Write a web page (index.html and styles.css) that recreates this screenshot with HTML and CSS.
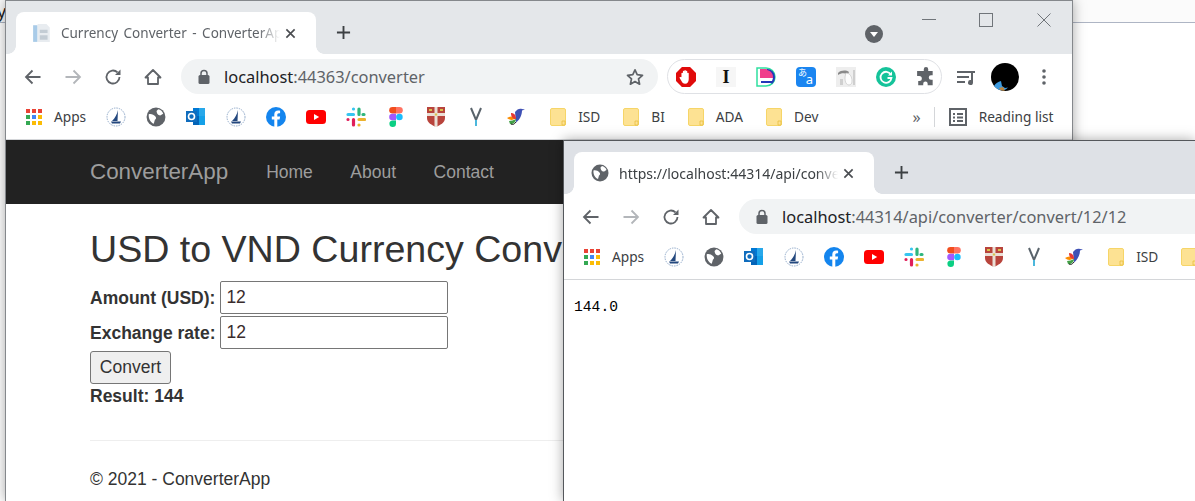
FILE: index.html
```html
<!DOCTYPE html>
<html lang="en">
<head>
  <meta charset="UTF-8">
  <title>Currency Converter - ConverterApp</title>
  <link rel="stylesheet" href="styles.css">
</head>
<body>
  <svg class="defs" aria-hidden="true">
    <symbol id="i-back" viewBox="0 0 18 18"><path d="M16.5 9H2M8.5 2.5L2 9l6.500 6.500" fill="none" stroke="currentColor" stroke-width="1.800"/></symbol>
    <symbol id="i-forward" viewBox="0 0 18 18"><path d="M1.500 9H16M9.500 2.500L16 9l-6.500 6.500" fill="none" stroke="currentColor" stroke-width="1.800"/></symbol>
    <symbol id="i-reload" viewBox="0 0 18 18"><path d="M15.500 9a6.500 6.500 0 1 1-2-4.700" fill="none" stroke="currentColor" stroke-width="1.800"/><path d="M16.500 1.500v5.500h-5.500z" fill="currentColor"/></symbol>
    <symbol id="i-home" viewBox="0 0 18 18"><path d="M9 2L16.500 9.500H14V16H4V9.500H1.500z" fill="none" stroke="currentColor" stroke-width="1.800" stroke-linejoin="round"/></symbol>
    <symbol id="i-lock" viewBox="0 0 14 16"><rect x="1.500" y="6" width="11" height="9" rx="1.500" fill="currentColor"/><path d="M4 6.500V4.500a3 3 0 0 1 6 0v2" fill="none" stroke="currentColor" stroke-width="1.500"/></symbol>
    <symbol id="i-star" viewBox="0 0 18 18"><path d="M9 1.800l2.200 4.900 5.300.6-4 3.600 1.100 5.300L9 13.500l-4.600 2.700 1.100-5.300-4-3.600 5.300-.6z" fill="none" stroke="#5f6368" stroke-width="1.700" stroke-linejoin="round"/></symbol>
    <symbol id="i-close" viewBox="0 0 12 12"><path d="M1.500 1.500l9 9M10.500 1.500l-9 9" fill="none" stroke="currentColor" stroke-width="1.800"/></symbol>
    <symbol id="i-plus" viewBox="0 0 16 16"><path d="M8 1v14M1 8h14" fill="none" stroke="currentColor" stroke-width="2"/></symbol>
    <symbol id="i-doc" viewBox="0 0 18 18"><path d="M1 2h4v15H1z" fill="#a9cbe8"/><path d="M5 1h8l3 3v13H5z" fill="#e8ecf0"/><path d="M7 6h7v3H7zM7 11h7v4H7z" fill="#c3ccd4"/></symbol>
    <symbol id="i-globe" viewBox="0 0 18 18"><circle cx="9" cy="9" r="8.500" fill="#5f6368"/><path d="M2.500 6.500C5 6 7 7 8.500 8.500c1 1 .5 2.500-.5 3l-1 3.500C4 14 2 10 2.500 6.500zM11 2c2 .5 4 2 4.500 4-1.500.500-2 2-3.500 1.500S9.500 5 9.500 3.500z" fill="#fff"/></symbol>
    <symbol id="i-grid" viewBox="0 0 16 16">
      <rect width="4" height="4" fill="#ea4335"/><rect x="6" width="4" height="4" fill="#ea4335"/><rect x="12" width="4" height="4" fill="#ea4335"/>
      <rect y="6" width="4" height="4" fill="#34a853"/><rect x="6" y="6" width="4" height="4" fill="#4285f4"/><rect x="12" y="6" width="4" height="4" fill="#fbbc05"/>
      <rect y="12" width="4" height="4" fill="#34a853"/><rect x="6" y="12" width="4" height="4" fill="#fbbc05"/><rect x="12" y="12" width="4" height="4" fill="#fbbc05"/>
    </symbol>
    <symbol id="i-sail" viewBox="0 0 20 20"><circle cx="10" cy="10" r="9" fill="#fff" stroke="#8fa9c9" stroke-width="1" stroke-dasharray="1.500 1"/><path d="M12 3L11.500 14H6C9 11 11 7.500 12 3z" fill="#24487e"/><path d="M5 14.500h10l-1 2H6z" fill="#24487e"/></symbol>
    <symbol id="i-outlook" viewBox="0 0 20 20"><path d="M7 1h12v8H7z" fill="#28a8ea"/><path d="M7 1h6v8H7z" fill="#0078d4"/><path d="M7 9h12v9H7z" fill="#0364b8"/><path d="M13 9h6v9h-6z" fill="#14a0e8"/><rect y="4" width="11" height="11" fill="#0f6cbd"/><circle cx="5.500" cy="9.500" r="3" fill="none" stroke="#fff" stroke-width="1.600"/></symbol>
    <symbol id="i-fb" viewBox="0 0 20 20"><circle cx="10" cy="10" r="10" fill="#1485ee"/><path d="M8.300 20v-7.500H5.800V9.600h2.500V7.400c0-2.500 1.500-3.900 3.800-3.900 1 0 2 .2 2 .2v2.500h-1.200c-1.200 0-1.600.8-1.600 1.500v1.900h2.800l-.5 2.900h-2.300V20z" fill="#fff"/></symbol>
    <symbol id="i-yt" viewBox="0 0 20 14"><rect width="20" height="14" rx="3.500" fill="#f00"/><path d="M8 4l5.200 3L8 10z" fill="#fff"/></symbol>
    <symbol id="i-slack" viewBox="0 0 20 20" fill="none" stroke-width="3.200" stroke-linecap="round">
      <path d="M7.500 2v0M7.500 7.500H2" stroke="#36c5f0"/><path d="M13 2v5.500M18 7.500h-1" stroke="#2eb67d"/><path d="M13 18v0M13 12.500h5.500" stroke="#ecb22e"/><path d="M7.500 18v-5.500M2 12.500h0" stroke="#e01e5a"/>
    </symbol>
    <symbol id="i-figma" viewBox="0 0 14 20"><path d="M7 0H3.500a3.300 3.300 0 0 0 0 6.600H7z" fill="#f24e1e"/><path d="M7 0h3.500a3.300 3.300 0 0 1 0 6.600H7z" fill="#ff7262"/><path d="M7 6.700H3.500a3.300 3.300 0 0 0 0 6.600H7z" fill="#a259ff"/><circle cx="10.400" cy="10" r="3.300" fill="#1abcfe"/><path d="M3.500 13.400H7v3.300a3.300 3.300 0 1 1-3.500-3.300z" fill="#0acf83"/></symbol>
    <symbol id="i-shield" viewBox="0 0 18 20"><path d="M0 0h18v11c0 5-5 7-9 9-4-2-9-4-9-9z" fill="#b8443c"/><path d="M7.500 0h3v20h-3zM0 6h18v3H0z" fill="#eadfd6"/><path d="M2 2h3v2H2zM13 2h3v2h-3zM7.800 6.500h2.400v2H7.800z" fill="#d8c24a"/></symbol>
    <symbol id="i-v" viewBox="0 0 14 20"><path d="M2 1l5 12 5-12" fill="none" stroke="#59636b" stroke-width="2"/><path d="M6 13h2v6H6z" fill="#4cb7dc"/></symbol>
    <symbol id="i-bird" viewBox="0 0 20 20"><path d="M9 5c2-3 5-4 7-3l3 .5-3 1c0 4-2 9-6 12z" fill="#3f51b5"/><path d="M1 11c3-2 6-2 9 0-2 2-6 3-9 0z" fill="#fb8c00"/><path d="M5 6c3 0 5 2 5 6-3 0-5-2-5-6z" fill="#e53935"/><path d="M3 14c2 0 5-1 7-2 0 3-3 6-6 5z" fill="#43a047"/><path d="M5 17c2 1 3 .5 5-2" fill="none" stroke="#222" stroke-width="1"/></symbol>
    <symbol id="i-folder" viewBox="0 0 16 18"><rect x=".5" y=".5" width="15" height="17" rx="1.500" fill="#fde293" stroke="#f6d568"/><path d="M12 13h3v4h-3z" fill="#fde293" stroke="#e8bf3f" stroke-width=".8"/></symbol>
    <symbol id="i-list" viewBox="0 0 18 18"><rect x="1" y="1" width="16" height="16" fill="none" stroke="#5f6368" stroke-width="2"/><path d="M4 5h2v2H4zM8 5h6v2H8zM4 8.500h2v2H4zM8 8.500h6v2H8zM4 12h2v2H4zM8 12h6v2H8z" fill="#5f6368"/></symbol>
    <symbol id="i-stop" viewBox="0 0 22 22"><path d="M6.500 0h9L22 6.500v9L15.500 22h-9L0 15.500v-9z" fill="#e00b0b"/><path d="M6 11V7a.8.800 0 0 1 1.600 0v3V5a.8.800 0 0 1 1.600 0v5V4a.8.800 0 0 1 1.600 0v6V5a.8.800 0 0 1 1.600 0v6V7a.8.800 0 0 1 1.600 0v6.500c0 3-1.500 5-4 5-2 0-3-1-4-3l-2-3.500c-.5-1 .8-1.500 1.500-.8z" fill="#fff"/></symbol>
    <symbol id="i-book" viewBox="0 0 20 20"><path d="M1 1h9a9 9 0 0 1 0 18H1z" fill="#fff" stroke="#2fe0a0" stroke-width="1.500"/><path d="M4 2h6a8 8 0 0 1 8 8v1H4z" fill="#f03e8c"/><path d="M11 2a8 8 0 0 1 8 8c0 3-1 5-3 7l-1-1c1-2 2-4 2-6 0-3-2-6-6-7z" fill="#2438b8"/><path d="M5 14h11v2H5z" fill="#2438b8"/></symbol>
    <symbol id="i-toucan" viewBox="0 0 20 20"><rect width="20" height="20" fill="#eeeeee"/><path d="M2 6c3-3 8-3 11-1l-1 2C8 6 5 6 2 8z" fill="#8a8a8a"/><path d="M10 6c4 0 6 4 6 8 0 2-1 4-3 4-4 0-5-7-3-12z" fill="#fdfdfd" stroke="#bdbdbd" stroke-width=".6"/><path d="M17 3h2v15h-2zM4 12h3v6H4z" fill="#cfcfcf"/></symbol>
    <symbol id="i-grammarly" viewBox="0 0 20 20"><circle cx="10" cy="10" r="10" fill="#15c39a"/><path d="M14.800 7.500A5.500 5.500 0 1 0 15.500 11h-4" fill="none" stroke="#fff" stroke-width="1.800"/><path d="M16 4.500v4h-4z" fill="#fff"/></symbol>
    <symbol id="i-puzzle" viewBox="0 0 18 18"><path d="M7 2a2 2 0 0 1 4 0v1.500h4v4h-1.500a2 2 0 0 0 0 4H15v5h-4.500V15a2 2 0 0 0-4 0v1.500H2v-4h1a2.200 2.200 0 0 0 0-4.500H1V3.500h6z" fill="#5f6368"/></symbol>
    <symbol id="i-media" viewBox="0 0 20 18"><path d="M1 3h14v2H1zM1 8h12v2H1zM1 13h8v2H1z" fill="#5f6368"/><path d="M15 3h4v2h-2v9.500a2.500 2.500 0 1 1-2-2.400z" fill="#5f6368"/></symbol>
    <symbol id="i-avatar" viewBox="0 0 28 28"><circle cx="14" cy="14" r="14" fill="#000"/><path d="M3 23c2-3 4-4 7-5l1 5 3 2 3-.500C13 29 7 28 3 23z" fill="#3d9be0"/><path d="M8 25l4-1 2 3.500C11 28 9 27 8 25z" fill="#c0853c"/></symbol>
    <symbol id="i-kebab" viewBox="0 0 4 16"><circle cx="2" cy="2" r="1.800" fill="#5f6368"/><circle cx="2" cy="8" r="1.800" fill="#5f6368"/><circle cx="2" cy="14" r="1.800" fill="#5f6368"/></symbol>
    <symbol id="i-drop" viewBox="0 0 18 18"><circle cx="9" cy="9" r="9" fill="#5f6368"/><path d="M5 7h8l-4 5z" fill="#fff"/></symbol>
  </svg>

  <div class="desk-header">y</div>

  <!-- first window: the converter page -->
  <section class="window win-main">
    <div class="tabstrip">
      <div class="tab">
        <svg class="tab-icon"><use href="#i-doc"/></svg>
        <span class="tab-title">Currency Converter - ConverterApp</span>
        <svg class="tab-close"><use href="#i-close"/></svg>
      </div>
      <svg class="new-tab"><use href="#i-plus"/></svg>
      <svg class="tab-search"><use href="#i-drop"/></svg>
      <div class="win-controls">
        <span class="ctl-min"></span>
        <span class="ctl-max"></span>
        <svg class="ctl-close" viewBox="0 0 14 14"><path d="M.5.5l13 13M13.500.5l-13 13"/></svg>
      </div>
    </div>
    <div class="toolbar">
      <span class="tool"><svg class="tool-icon"><use href="#i-back"/></svg></span>
      <span class="tool is-off"><svg class="tool-icon"><use href="#i-forward"/></svg></span>
      <span class="tool"><svg class="tool-icon"><use href="#i-reload"/></svg></span>
      <span class="tool"><svg class="tool-icon"><use href="#i-home"/></svg></span>
      <div class="omnibox">
        <svg class="lock"><use href="#i-lock"/></svg>
        <span class="url"><b>localhost</b>:44363/converter</span>
        <svg class="star"><use href="#i-star"/></svg>
      </div>
      <div class="ext-pill">
        <svg class="ext"><use href="#i-stop"/></svg>
        <span class="ext ext-i">I</span>
        <svg class="ext"><use href="#i-book"/></svg>
        <span class="ext ext-tr"><span class="tr-ja">あ</span><span class="tr-en">a</span></span>
        <svg class="ext"><use href="#i-toucan"/></svg>
        <svg class="ext"><use href="#i-grammarly"/></svg>
        <svg class="ext"><use href="#i-puzzle"/></svg>
      </div>
      <span class="tool tool-media"><svg class="media"><use href="#i-media"/></svg></span>
      <span class="tool tool-tight"><svg class="avatar"><use href="#i-avatar"/></svg></span>
      <span class="tool tool-tight"><svg class="kebab"><use href="#i-kebab"/></svg></span>
    </div>
    <div class="bookmarks">
      <span class="bm bm-apps"><svg class="bm-small"><use href="#i-grid"/></svg>Apps</span>
      <span class="bm"><svg class="bm-icon"><use href="#i-sail"/></svg></span>
      <span class="bm"><svg class="bm-icon"><use href="#i-globe"/></svg></span>
      <span class="bm"><svg class="bm-icon"><use href="#i-outlook"/></svg></span>
      <span class="bm"><svg class="bm-icon"><use href="#i-sail"/></svg></span>
      <span class="bm"><svg class="bm-icon"><use href="#i-fb"/></svg></span>
      <span class="bm"><svg class="bm-icon"><use href="#i-yt"/></svg></span>
      <span class="bm"><svg class="bm-icon"><use href="#i-slack"/></svg></span>
      <span class="bm"><svg class="bm-icon"><use href="#i-figma"/></svg></span>
      <span class="bm"><svg class="bm-icon"><use href="#i-shield"/></svg></span>
      <span class="bm"><svg class="bm-icon"><use href="#i-v"/></svg></span>
      <span class="bm"><svg class="bm-icon"><use href="#i-bird"/></svg></span>
      <span class="bm bm-folder bm-first"><svg class="bm-small"><use href="#i-folder"/></svg>ISD</span>
      <span class="bm bm-folder"><svg class="bm-small"><use href="#i-folder"/></svg>BI</span>
      <span class="bm bm-folder"><svg class="bm-small"><use href="#i-folder"/></svg>ADA</span>
      <span class="bm bm-folder"><svg class="bm-small"><use href="#i-folder"/></svg>Dev</span>
      <span class="bm-more">»</span>
      <span class="bm-sep"></span>
      <span class="bm bm-read"><svg class="bm-list"><use href="#i-list"/></svg>Reading list</span>
    </div>

    <nav class="navbar">
      <a class="brand">ConverterApp</a>
      <a class="nav-link">Home</a>
      <a class="nav-link">About</a>
      <a class="nav-link">Contact</a>
    </nav>
    <main class="page">
      <h1 class="page-title">USD to VND Currency Converter</h1>
      <div class="field">
        <label class="field-label">Amount (USD):</label>
        <input class="field-input" type="text" value="12">
      </div>
      <div class="field">
        <label class="field-label">Exchange rate:</label>
        <input class="field-input" type="text" value="12">
      </div>
      <button class="btn" type="button">Convert</button>
      <p class="result">Result: 144</p>
      <hr class="rule">
      <footer class="foot">© 2021 - ConverterApp</footer>
    </main>
  </section>

  <!-- second window: raw api response -->
  <section class="window win-api">
    <div class="tabstrip">
      <div class="tab">
        <svg class="tab-icon"><use href="#i-globe"/></svg>
        <span class="tab-title">https://localhost:44314/api/converter/convert/12/12</span>
        <svg class="tab-close"><use href="#i-close"/></svg>
      </div>
      <svg class="new-tab"><use href="#i-plus"/></svg>
    </div>
    <div class="toolbar">
      <span class="tool"><svg class="tool-icon"><use href="#i-back"/></svg></span>
      <span class="tool is-off"><svg class="tool-icon"><use href="#i-forward"/></svg></span>
      <span class="tool"><svg class="tool-icon"><use href="#i-reload"/></svg></span>
      <span class="tool"><svg class="tool-icon"><use href="#i-home"/></svg></span>
      <div class="omnibox omnibox-wide">
        <svg class="lock"><use href="#i-lock"/></svg>
        <span class="url"><b>localhost</b>:44314/api/converter/convert/12/12</span>
      </div>
    </div>
    <div class="bookmarks">
      <span class="bm bm-apps"><svg class="bm-small"><use href="#i-grid"/></svg>Apps</span>
      <span class="bm"><svg class="bm-icon"><use href="#i-sail"/></svg></span>
      <span class="bm"><svg class="bm-icon"><use href="#i-globe"/></svg></span>
      <span class="bm"><svg class="bm-icon"><use href="#i-outlook"/></svg></span>
      <span class="bm"><svg class="bm-icon"><use href="#i-sail"/></svg></span>
      <span class="bm"><svg class="bm-icon"><use href="#i-fb"/></svg></span>
      <span class="bm"><svg class="bm-icon"><use href="#i-yt"/></svg></span>
      <span class="bm"><svg class="bm-icon"><use href="#i-slack"/></svg></span>
      <span class="bm"><svg class="bm-icon"><use href="#i-figma"/></svg></span>
      <span class="bm"><svg class="bm-icon"><use href="#i-shield"/></svg></span>
      <span class="bm"><svg class="bm-icon"><use href="#i-v"/></svg></span>
      <span class="bm"><svg class="bm-icon"><use href="#i-bird"/></svg></span>
      <span class="bm bm-folder bm-first"><svg class="bm-small"><use href="#i-folder"/></svg>ISD</span>
      <span class="bm bm-folder"><svg class="bm-small"><use href="#i-folder"/></svg>BI</span>
    </div>
    <pre class="raw">144.0</pre>
  </section>
</body>
</html>
```

FILE: styles.css
```css
html, body { margin: 0; height: 501px; overflow: hidden; background: #fff; }
body { position: relative; font-family: "Liberation Sans", Arial, sans-serif; color: #333; }
.defs { display: none; }

/* what is left of the page behind the windows */
.desk-header { height: 22px; background: #fbfbfb; border-bottom: 1px solid #aeb5c4; font: 18px/22px "Noto Sans", sans-serif; text-indent: -3px; color: #222; overflow: hidden; }

.window { position: absolute; box-sizing: border-box; background: #fff; overflow: hidden; border: 1px solid #85888c; box-shadow: 0 0 12px rgba(0, 0, 0, .35); }
.win-main { left: 5px; top: 0; width: 1068px; height: 501px; border-bottom: 0; }
.win-api { left: 563px; top: 140px; width: 632px; height: 361px; border-width: 1px 0 0 1px; border-color: #55585c; }

/* tab strip */
.tabstrip { height: 53px; box-sizing: border-box; padding: 11px 0 0 10px; background: #e4e7ea; display: flex; align-items: flex-start; position: relative; }
.win-api .tabstrip { background: #dee1e6; }
.tab { width: 300px; height: 42px; box-sizing: border-box; padding: 0 16px; background: #fff; border-radius: 8px 8px 0 0; display: flex; align-items: center; position: relative; margin-bottom: -1px; }
.tab::before, .tab::after { content: ""; position: absolute; bottom: 0; width: 8px; height: 8px; }
.tab::before { left: -8px; background: radial-gradient(circle at 0 0, transparent 7.5px, #fff 8px); }
.tab::after { right: -8px; background: radial-gradient(circle at 100% 0, transparent 7.5px, #fff 8px); }
.tab-icon { width: 20px; height: 20px; flex: none; }
.tab-title { margin-left: 9px; width: 219px; flex: none; font: 13.500px "Noto Sans", sans-serif; word-spacing: 2px; color: #5f6368; white-space: nowrap; overflow: hidden; -webkit-mask-image: linear-gradient(to right, #000 90%, transparent); mask-image: linear-gradient(to right, #000 90%, transparent); }
.win-api .tab-title { color: #3c4043; margin-left: 10px; font-size: 14px; word-spacing: 0; }
.win-api .tab-icon { width: 18px; height: 18px; margin-left: 1px; }
.tab-close { width: 11px; height: 11px; margin-left: 5px; flex: none; color: #4a4d51; }
.new-tab { width: 15px; height: 15px; margin: 13px 0 0 20px; flex: none; color: #3c4043; }
.tab-search { width: 18px; height: 18px; position: absolute; left: 859px; top: 24px; }

.win-controls { position: absolute; top: 0; right: 0; }
.ctl-min { position: absolute; right: 136px; top: 18px; width: 14px; height: 1px; background: #70757a; }
.ctl-max { position: absolute; right: 79px; top: 12px; width: 12px; height: 12px; border: 1px solid #70757a; }
.ctl-close { position: absolute; right: 21px; top: 12px; width: 14px; height: 14px; fill: none; stroke: #70757a; }

/* toolbar */
.toolbar { height: 46px; box-sizing: border-box; padding: 5px 0 0 7px; display: flex; align-items: flex-start; color: #5f6368; }
.tool { width: 40px; height: 35px; flex: none; display: flex; align-items: center; justify-content: center; }
.tool.is-off { color: #b3b6ba; }
.tool-icon { width: 18px; height: 18px; }
.omnibox { width: 477px; height: 35px; flex: none; box-sizing: border-box; margin-left: 8px; padding: 0 14px 0 16px; border-radius: 18px; background: #f1f3f4; display: flex; align-items: center; }
.omnibox-wide { width: 700px; }
.lock { width: 14px; height: 16px; flex: none; }
.url { margin-left: 13px; font: 16.400px "Noto Sans", sans-serif; color: #5f6368; white-space: nowrap; }
.url b { font-weight: 400; color: #202124; }
.star { width: 18px; height: 18px; margin-left: auto; }
.ext-pill { width: 275px; height: 35px; flex: none; box-sizing: border-box; margin-left: 9px; padding-left: 8px; border: 1px solid #dfe1e5; border-radius: 18px; display: flex; align-items: center; gap: 20px; }
.ext { width: 20px; height: 20px; flex: none; }
.ext-i { background: #f6f6f6; color: #111; font: 700 18px/20px "Liberation Serif", serif; text-align: center; }
.ext-tr { background: #1a85f0; border-radius: 4px; color: #fff; position: relative; overflow: hidden; }
.tr-ja { position: absolute; left: 2px; top: 0; font: 9px/11px "Noto Sans CJK JP", sans-serif; }
.tr-en { position: absolute; right: 3px; bottom: 1px; font: 13px/13px "Noto Sans", sans-serif; }
.tool-media { margin-left: 4px; }
.tool-tight { margin-left: -1px; }
.media { width: 20px; height: 18px; }
.avatar { width: 28px; height: 28px; }
.kebab { width: 4px; height: 16px; }

/* bookmarks bar */
.bookmarks { height: 40px; box-sizing: border-box; padding: 0 0 6px 8px; border-bottom: 1px solid #d4d6d9; display: flex; align-items: center; font: 13.700px "Noto Sans", sans-serif; color: #3c4043; white-space: nowrap; }
.bm { flex: none; display: flex; align-items: center; gap: 12px; padding: 0 10px; }
.bm-apps { padding: 0 10px 0 12px; }
.bm-folder { padding: 0 11px 0 12px; }
.bm-first { margin-left: 2px; }
.bm-icon { width: 20px; height: 20px; flex: none; }
.bm-small { width: 16px; height: 18px; flex: none; }
.bm-list { width: 18px; height: 18px; flex: none; }
.bm-more { margin-left: 83px; font-size: 16px; color: #5f6368; }
.bm-sep { width: 1px; height: 20px; margin-left: 13px; background: #d4d6d9; }
.bm-read { padding-left: 14px; }

/* converter page */
.navbar { height: 64px; background: #222; display: flex; align-items: center; padding-left: 84px; font-size: 17.500px; color: #9d9d9d; }
.brand { font-size: 22.400px; margin-right: 38px; }
.nav-link { margin-right: 37.500px; }
.page { padding: 25px 0 0 84px; font-size: 17.500px; line-height: 24px; }
.page-title { margin: 0 0 12px; font-size: 37.600px; line-height: 40px; font-weight: 400; white-space: nowrap; }
.field { display: flex; align-items: center; gap: 5px; margin-bottom: 2px; }
.field-label { font-weight: 700; }
.field-input { width: 228px; height: 33px; box-sizing: border-box; padding: 1px 5px; border: 1px solid #767676; border-radius: 2px; font: 17.500px "Liberation Sans", Arial, sans-serif; color: #3a2c2c; }
.btn { display: block; width: 81px; height: 33px; padding: 0; background: #efefef; border: 1px solid #767676; border-radius: 3px; font: 17.500px "Liberation Sans", Arial, sans-serif; color: #333; }
.result { margin: 0; font-weight: 700; }
.rule { margin: 32px 0 26px; width: 700px; border: 0; border-top: 1px solid #eee; }
.foot { line-height: 24px; }

/* api window */
.raw { margin: 0; padding: 17px 0 0 10px; font: 14.667px/20px "Liberation Mono", "DejaVu Sans Mono", monospace; color: #000; }
```
